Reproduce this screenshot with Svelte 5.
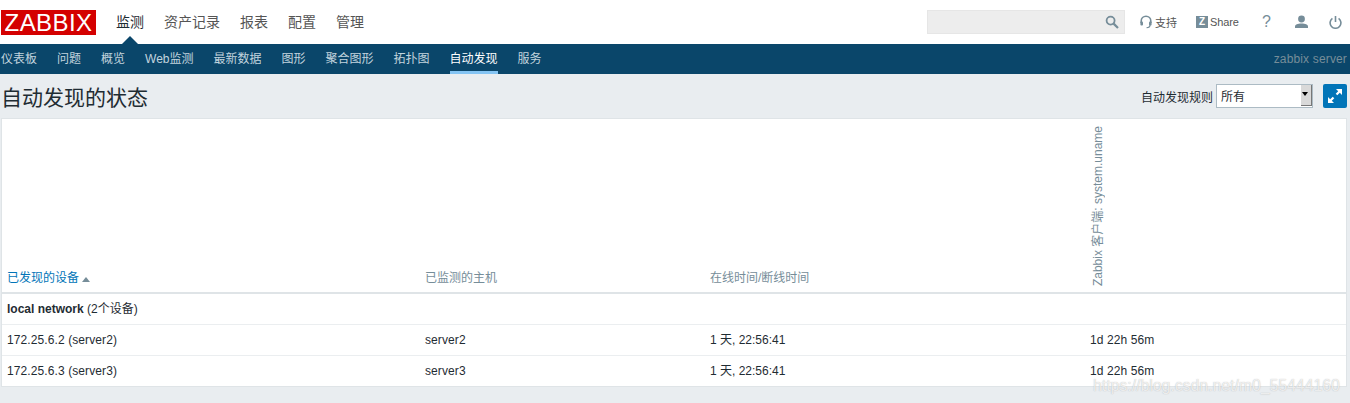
<script>
  const mainMenu = ['监测', '资产记录', '报表', '配置', '管理']
  const subMenu = ['仪表板', '问题', '概览', 'Web监测', '最新数据', '图形', '聚合图形', '拓扑图', '自动发现', '服务']
  const rows = [
    { device: '172.25.6.2 (server2)', host: 'server2', uptime: '1 天, 22:56:41', value: '1d 22h 56m' },
    { device: '172.25.6.3 (server3)', host: 'server3', uptime: '1 天, 22:56:41', value: '1d 22h 56m' }
  ]
</script>

<main>
  <header class="top">
    <div class="logo">ZABBIX</div>
    <nav class="main-nav">
      {#each mainMenu as item, i}
        <span class="main-item" class:selected={i === 0}>{item}</span>
      {/each}
    </nav>
    <div class="tools">
      <div class="search">
        <svg width="14" height="14" viewBox="0 0 14 14" fill="none" stroke="#768d99" stroke-width="1.8">
          <circle cx="5.6" cy="5.6" r="4"/>
          <path d="M8.6 8.6l4.4 4.4" stroke-width="2.2"/>
        </svg>
      </div>
      <span class="tool support">
        <svg width="12" height="14" viewBox="0 0 12 14" fill="none" stroke="#768d99" stroke-width="1.6">
          <path d="M1.2 8V6a4.8 4.8 0 0 1 9.6 0v2"/>
          <rect x="0.4" y="6.4" width="2.6" height="4" rx="1" fill="#768d99" stroke="none"/>
          <rect x="9" y="6.4" width="2.6" height="4" rx="1" fill="#768d99" stroke="none"/>
          <path d="M10 10c0 1.6-1.6 2.6-3.4 2.6" stroke-width="1.2"/>
        </svg>
        支持
      </span>
      <span class="tool share"><b class="z">Z</b>Share</span>
      <span class="tool help">?</span>
      <svg class="user" width="13" height="14" viewBox="0 0 13 14" fill="#768d99">
        <circle cx="6.5" cy="4" r="3.4"/>
        <path d="M0 13v-1.6c0-2 2.6-3 6.5-3s6.5 1 6.5 3V13z"/>
      </svg>
      <svg class="power" width="13" height="14" viewBox="0 0 13 14" fill="none" stroke="#768d99" stroke-width="1.6">
        <path d="M6.5 1v6"/>
        <path d="M3.4 3.4a5.4 5.4 0 1 0 6.2 0"/>
      </svg>
    </div>
  </header>

  <nav class="sub-nav">
    <div class="sub-items">
      {#each subMenu as item}
        <span class="sub-item" class:active={item === '自动发现'}>{item}</span>
      {/each}
    </div>
    <span class="server">zabbix server</span>
  </nav>

  <div class="title-row">
    <h1>自动发现的状态</h1>
    <div class="controls">
      <label for="rule">自动发现规则</label>
      <div class="select" id="rule">
        <span>所有</span>
        <span class="arrow"></span>
      </div>
      <button class="fullscreen" aria-label="fullscreen">
        <svg width="16" height="16" viewBox="0 0 16 16" fill="#fff">
          <path d="M9 1h6v6l-2.2-2.2-2.5 2.5-1.6-1.6 2.5-2.5z"/>
          <path d="M7 15H1V9l2.2 2.2 2.5-2.5 1.6 1.6-2.5 2.5z"/>
        </svg>
      </button>
    </div>
  </div>

  <div class="card">
    <table>
      <thead>
        <tr>
          <th class="c1 link">已发现的设备<span class="sort"></span></th>
          <th class="c2">已监测的主机</th>
          <th class="c3">在线时间/断线时间</th>
          <th class="c4"><span class="vertical">Zabbix 客户端: system.uname</span></th>
        </tr>
      </thead>
      <tbody>
        <tr>
          <td class="group" colspan="4"><b>local network</b> (2个设备)</td>
        </tr>
        {#each rows as row}
          <tr>
            <td>{row.device}</td>
            <td>{row.host}</td>
            <td class="uptime">{row.uptime}</td>
            <td>{row.value}</td>
          </tr>
        {/each}
      </tbody>
    </table>
  </div>

  <div class="watermark">https://blog.csdn.net/m0_55444160</div>
</main>

<style>
  :global(body) {
    background: #ebeef0;
  }

  main {
    position: relative;
    height: 403px;
    overflow: hidden;
    font-family: "Liberation Sans", "Noto Sans CJK SC", sans-serif;
    font-size: 12px;
    color: #1f2c33;
    background: #e9edf0;
  }

  .top {
    display: flex;
    align-items: center;
    height: 44px;
    background: #fff;
  }

  .logo {
    box-sizing: border-box;
    width: 95px;
    height: 25px;
    margin: 0 0 0 1px;
    background: #d40000;
    color: #fff;
    font-size: 24px;
    line-height: 25px;
    text-align: center;
    letter-spacing: 0.4px;
  }

  .main-nav {
    display: flex;
    gap: 20px;
    margin-left: 20px;
    font-size: 14px;
  }

  .main-item {
    position: relative;
    color: #555;
    line-height: 44px;
  }

  .main-item.selected {
    color: #1f2c33;
  }

  .main-item.selected::after {
    content: '';
    position: absolute;
    left: 6px;
    bottom: 0;
    border-left: 8px solid transparent;
    border-right: 8px solid transparent;
    border-bottom: 8px solid #0a466a;
  }

  .tools {
    display: flex;
    align-items: center;
    margin-left: auto;
    height: 44px;
  }

  .search {
    box-sizing: border-box;
    display: flex;
    align-items: center;
    justify-content: flex-end;
    width: 198px;
    height: 24px;
    padding-right: 5px;
    background: #ededed;
    border: 1px solid #e6e6e6;
    margin-right: 15px;
  }

  .tool {
    display: flex;
    align-items: center;
    color: #555;
    font-size: 11px;
  }

  .support svg {
    margin-right: 3px;
  }

  .support {
    width: 56px;
  }

  .share {
    width: 58px;
    letter-spacing: -0.1px;
  }

  .z {
    display: inline-block;
    width: 12px;
    height: 12px;
    margin-right: 2px;
    background: #768d99;
    color: #fff;
    font-size: 10px;
    line-height: 12px;
    text-align: center;
  }

  .help {
    width: 13px;
    margin-left: 8px;
    color: #768d99;
    font-size: 16px;
  }

  .user {
    margin-left: 20px;
  }

  .power {
    margin: 0 8px 0 21px;
  }

  .sub-nav {
    display: flex;
    justify-content: space-between;
    height: 30px;
    background: #0a466a;
  }

  .sub-items {
    display: flex;
    gap: 20px;
    padding-left: 1px;
  }

  .sub-item {
    height: 30px;
    box-sizing: border-box;
    line-height: 30px;
    color: #c2d4de;
  }

  .sub-item.active {
    color: #fff;
    border-bottom: 3px solid #84c4f3;
  }

  .server {
    padding-right: 3px;
    line-height: 30px;
    letter-spacing: 0.15px;
    color: #768d99;
  }

  .title-row {
    display: flex;
    justify-content: space-between;
    align-items: center;
    height: 44px;
    padding: 0 3px 0 1px;
  }

  h1 {
    margin: 0;
    font-size: 21px;
    font-weight: 400;
    color: #1f2c33;
  }

  .controls {
    display: flex;
    align-items: center;
  }

  label {
    margin-right: 3px;
  }

  .select {
    box-sizing: border-box;
    display: flex;
    justify-content: space-between;
    width: 97px;
    height: 24px;
    padding: 2px 0 0 4px;
    background: #fff;
    border: 1px solid #acbbc4;
    line-height: 20px;
  }

  .arrow {
    position: relative;
    width: 11px;
    height: 21px;
    margin-top: -2px;
    background: #d9d9d9;
    border-right: 1px solid #777;
    border-bottom: 1px solid #777;
    box-sizing: border-box;
  }

  .arrow::after {
    content: '';
    position: absolute;
    left: 1px;
    top: 7px;
    border-left: 3.5px solid transparent;
    border-right: 3.5px solid transparent;
    border-top: 4px solid #000;
  }

  .fullscreen {
    display: flex;
    align-items: center;
    justify-content: center;
    width: 24px;
    height: 24px;
    margin-left: 10px;
    padding: 0;
    background: #0275b8;
    border: none;
    border-radius: 2px;
  }

  .card {
    margin: 0 3px 0 1px;
    background: #fff;
    border: 1px solid #dfe4e7;
  }

  table {
    width: 100%;
    border-collapse: collapse;
    table-layout: fixed;
  }

  th {
    box-sizing: border-box;
    height: 174px;
    padding: 0 5px 7px;
    vertical-align: bottom;
    text-align: left;
    font-weight: 400;
    color: #768d99;
    border-bottom: 2px solid #dfe4e7;
  }

  .c1 { width: 418px; }
  .c2 { width: 285px; }
  .c3 { width: 380px; }

  th.link {
    color: #0275b8;
  }

  .sort {
    display: inline-block;
    margin-left: 3px;
    border-left: 4px solid transparent;
    border-right: 4px solid transparent;
    border-bottom: 5px solid #768d99;
  }

  .vertical {
    display: block;
    writing-mode: vertical-rl;
    text-orientation: sideways;
    transform: rotate(180deg);
    width: 14px;
    margin-left: -2px;
    margin-bottom: -1px;
    white-space: nowrap;
  }

  td {
    box-sizing: border-box;
    height: 31px;
    padding: 0 5px;
    line-height: 14px;
    letter-spacing: 0.1px;
    border-bottom: 1px solid #ebeef0;
  }

  td.group,
  td.uptime {
    letter-spacing: 0;
  }

  tr:last-child td {
    border-bottom: none;
  }

  .watermark {
    position: absolute;
    left: 1093px;
    top: 377px;
    font-size: 15.8px;
    line-height: 18px;
    color: rgba(255, 255, 255, 0.75);
    text-shadow: 0 0 1px rgba(120, 120, 120, 0.55);
    white-space: nowrap;
  }
</style>
